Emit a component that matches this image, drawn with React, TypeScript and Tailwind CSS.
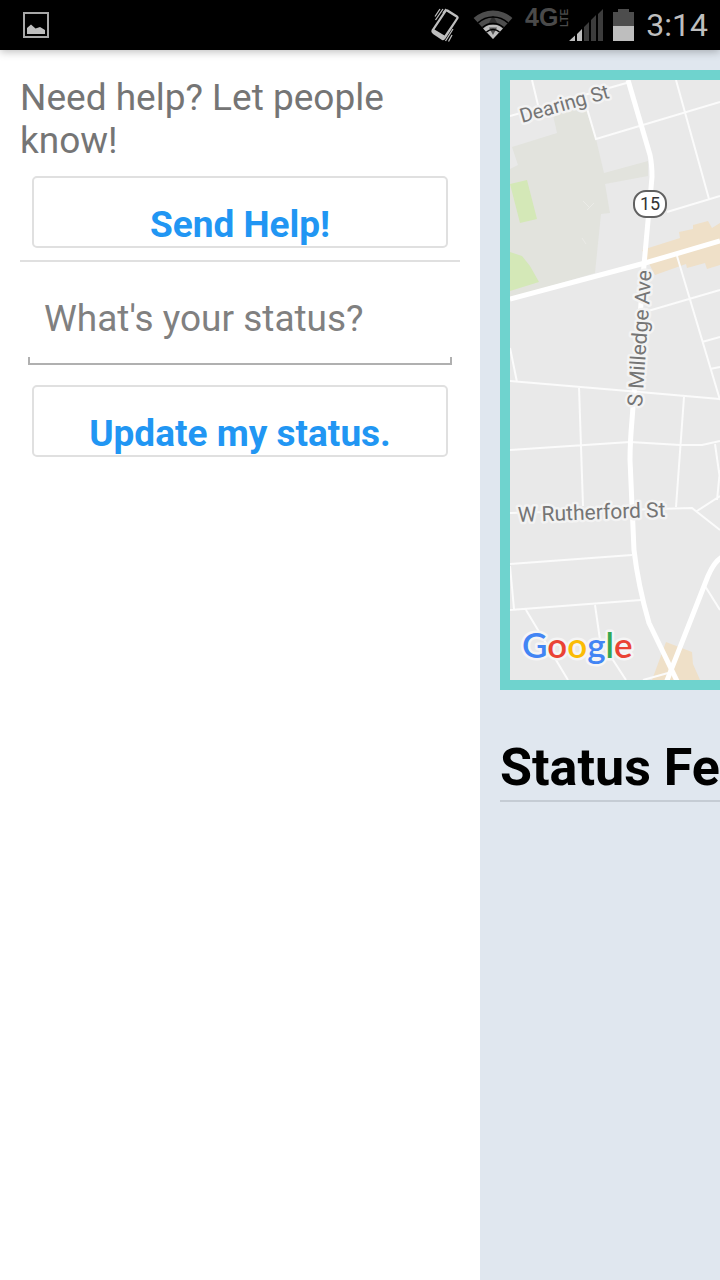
import React from "react";

function PictureIcon() {
  return (
    <svg width="26" height="26" viewBox="0 0 26 26" aria-hidden="true">
      <rect x="1" y="1" width="24" height="24" fill="none" stroke="#a8a8a8" strokeWidth="2" />
      <path d="M4 22V16L8 12.500L12.500 16.500L17 15L22 18V22Z" fill="#bebebe" />
    </svg>
  );
}

function VibrateIcon() {
  return (
    <svg width="30" height="34" viewBox="430 8 30 34" aria-hidden="true">
      <path
        fill="#bebebe"
        fillRule="evenodd"
        d="M444.500 10.500Q446 8.500 448 9.500L457.500 15.500Q459.500 17 458.500 18.500L445.500 38.500Q444 41 442 40L433 34Q430.500 32 431.500 30ZM446.500 11.500L434.500 29.500L444.500 35.500L456.500 17.800Z"
      />
      <path
        d="M443 9L435.500 20M440 9L435 16.500M453 29L445.500 41M452 35L448.500 41.500M446 9L443 13"
        stroke="#bebebe"
        strokeWidth="1.300"
      />
    </svg>
  );
}

function WifiIcon() {
  return (
    <svg width="40" height="30" viewBox="-20 -29 40 30" aria-hidden="true">
      <path d="M0 0L-19.400 -20.900A28.500 28.500 0 0 1 19.400 -20.900Z" fill="#4d4d4d" />
      <path d="M0 0L-9.900 -10.600A14.500 14.500 0 0 1 9.900 -10.600Z" fill="#bebebe" />
      <path d="M0 -23.500L5 -14.500H-5Z" fill="#303030" />
      <path d="M-4 -11.500H4L0 -4Z" fill="#555" />
      <path
        d="M-15 -16.100A22 22 0 0 1 15 -16.100M-10.600 -11.400A15.500 15.500 0 0 1 10.600 -11.400M-6.500 -7A9.500 9.500 0 0 1 6.500 -7"
        fill="none"
        stroke="#000"
        strokeWidth="1.500"
      />
    </svg>
  );
}

function SignalIcon() {
  return (
    <svg width="34" height="32" viewBox="569 9 34 32" aria-hidden="true">
      <path d="M569 41L575 35.500V41ZM577 34L582 29V41H577Z" fill="#bebebe" />
      <path d="M584 27L589 22V41H584ZM591 20L596 15V41H591ZM598 14L603 9V41H598Z" fill="#3c3c3c" />
    </svg>
  );
}

function BatteryIcon() {
  return (
    <svg width="21" height="32" viewBox="613 8 21 32" aria-hidden="true">
      <path d="M613 11H618V8H629V11H634V25H613Z" fill="#4d4d4d" />
      <path d="M613 25H634V40H613Z" fill="#bebebe" />
    </svg>
  );
}

function NetworkIcon() {
  return (
    <svg width="48" height="42" viewBox="521 4 48 42" role="img" aria-label="4G LTE" fill="#4a4a4a">
      <text x="525" y="26" fontSize="25" fontWeight="700" fontFamily="Liberation Sans, sans-serif">4G</text>
      <text transform="translate(568 27) rotate(-90)" fontSize="10" fontWeight="700" fontFamily="Liberation Sans, sans-serif">LTE</text>
    </svg>
  );
}

function StatusBar() {
  return (
    <header className="relative z-10 flex h-[50px] items-center bg-black pr-3 pl-[23px] shadow-[0_2px_8px_rgba(0,0,0,0.25)]">
      <PictureIcon />
      <div className="ml-auto flex items-center">
        <VibrateIcon />
        <span className="ml-[13px]"><WifiIcon /></span>
        <span className="ml-2"><NetworkIcon /></span>
        <SignalIcon />
        <span className="ml-[10px]"><BatteryIcon /></span>
        <time className="ml-3 text-[32px] leading-10 text-[#bebebe]">3:14</time>
      </div>
    </header>
  );
}

const label = {
  fill: "#757575",
  stroke: "#f3f3f3",
  strokeWidth: 5,
  strokeLinejoin: "round" as const,
  paintOrder: "stroke",
  fontFamily: "Roboto, sans-serif",
};

function StreetMap() {
  return (
    <svg className="block h-full w-full" viewBox="510 80 210 600" preserveAspectRatio="xMinYMin slice" role="img" aria-label="Street map">
      <rect x="510" y="80" width="900" height="600" fill="#e9e9e9" />
      <path d="M553 115L585 107L596 139L604 173L648 161V176L605 184L610 213L601 214L595 273L510 298V169L518 165L512 147L557 133Z" fill="#e2e3dd" />
      <path d="M510 184L527 180L537 219L520 223ZM510 252L522 256L530 266L539 282L510 291Z" fill="#d4e8b7" />
      <path d="M642 250L680 238L679 232L693 229V225L708 221L712 228L720 223V265L707 269L705 263L687 268L686 264L655 275Z" fill="#efe0c8" />
      <path d="M666 642L692 652L693 664L700 680H652Z" fill="#efe0c8" />
      <g fill="none" stroke="#fbfbfb" strokeWidth="2">
        <path d="M532 80L538 105M510 116L630 82M586 105L596 139L720 102M676 80L709 199M667 212L720 196M677 256L720 400M648 311L720 290M702 342L720 337M710 369L720 367" />
        <path d="M510 348L517 382M510 381L628 391L720 399M579 387L583 506M684 397L676 507M510 450L630 442L680 445L702 445L720 441M715 444L720 479M510 513L692 508L720 530M697 511L720 496M717 500L720 470" />
        <path d="M510 564L632 555M510 610L641 600M510 566L514 609M526 610L568 680M595 605L600 640L626 680M643 680L668 673M705 586L720 610" />
      </g>
      <g fill="none" stroke="#fff" strokeWidth="5" strokeLinejoin="round">
        <path d="M510 299L645 263L720 241" />
        <path d="M628 80L650 155Q652 164 652 177L644 265L632 420Q630 443 630 460L634 550Q638 585 649 623L678 683" />
        <path d="M666 683L708 576Q714 562 722 557" />
      </g>
      <path d="M666 200L669 198M583 201L589 207M587 210L594 203M582 238L586 244" stroke="#ebebe7" />
      <text {...label} fontSize="20" transform="translate(522 123) rotate(-16)">Dearing St</text>
      <text {...label} fontSize="21" transform="translate(642 407) rotate(-86)">S Milledge Ave</text>
      <text {...label} fontSize="21" transform="translate(518 522) rotate(-2)">W Rutherford St</text>
      <rect x="634" y="191" width="32" height="26" rx="12" fill="#fff" stroke="#616161" strokeWidth="2" />
      <text x="650" y="210" textAnchor="middle" fontSize="18" fill="#333" fontFamily="Roboto, sans-serif">15</text>
      <text x="522" y="658" fontSize="35" fontWeight="600" fontFamily="Lato, sans-serif" stroke="#f5f5f5" strokeWidth="5" strokeLinejoin="round" paintOrder="stroke">
        <tspan fill="#4285f4">G</tspan><tspan fill="#ea4335">o</tspan><tspan fill="#fbbc05">o</tspan><tspan fill="#4285f4">g</tspan><tspan fill="#34a853">l</tspan><tspan fill="#ea4335">e</tspan>
      </text>
    </svg>
  );
}

function DrawerButton({ children }: { children: React.ReactNode }) {
  return (
    <button type="button" className="mx-3 flex h-[72px] items-end justify-center rounded-[5px] border-2 border-[#e0e0e0] bg-white text-[37px] leading-[43px] font-bold text-[#2196f3]">
      {children}
    </button>
  );
}

function Drawer() {
  return (
    <aside className="flex w-2/3 shrink-0 flex-col bg-white px-5 pt-[26px]">
      <p className="text-[37px] leading-[43px] text-[#757575]">Need help? Let people know!</p>
      <div className="mt-[14px] flex flex-col border-b-2 border-[#e0e0e0] pb-3">
        <DrawerButton>Send Help!</DrawerButton>
      </div>
      <div className="mx-2 mt-6 flex flex-col">
        <input
          type="text"
          aria-label="Status"
          placeholder="What's your status?"
          className="h-[71px] w-full bg-transparent px-4 pb-[6px] text-[37px] text-[#757575] outline-none placeholder:text-[#808080]"
        />
        <div className="h-2 border-x-2 border-b-2 border-[#b0b0b0]" />
      </div>
      <div className="mt-5 flex flex-col">
        <DrawerButton>Update my status.</DrawerButton>
      </div>
    </aside>
  );
}

export default function App() {
  return (
    <div className="flex min-h-screen flex-col bg-[#e0e7ef] font-[Roboto,sans-serif]">
      <StatusBar />
      <div className="flex grow">
        <Drawer />
        <main className="min-w-0 grow overflow-hidden pt-5 pl-5">
          <div className="h-[620px] border-y-[10px] border-l-[10px] border-[#6fd3ce]">
            <StreetMap />
          </div>
          <h1 className="mt-[46px] border-b-2 border-[#c5ccd4] text-[52px] leading-[64px] font-bold whitespace-nowrap text-black">
            Status Feed
          </h1>
        </main>
      </div>
    </div>
  );
}
